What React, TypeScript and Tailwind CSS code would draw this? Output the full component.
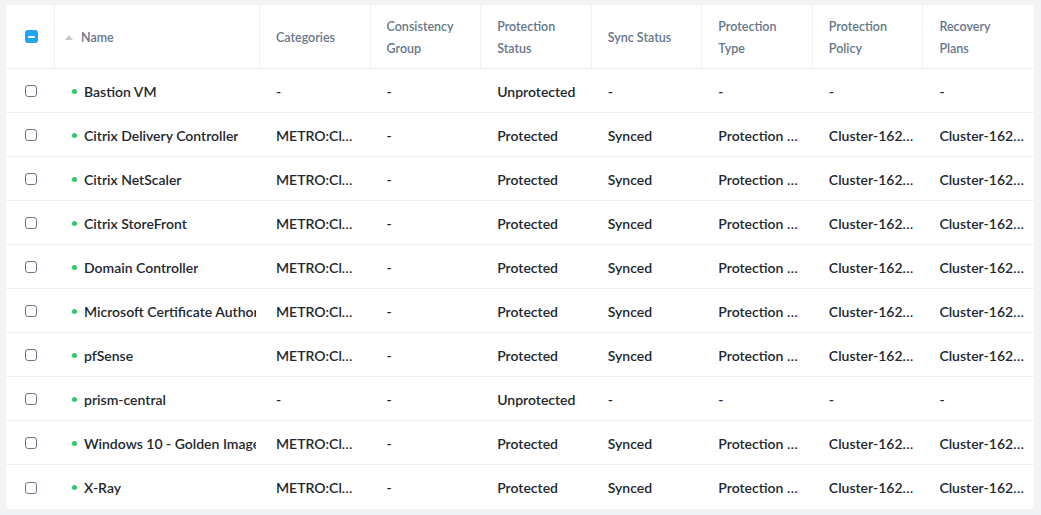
const columns = [
  "Categories",
  "Consistency\nGroup",
  "Protection\nStatus",
  "Sync Status",
  "Protection\nType",
  "Protection\nPolicy",
  "Recovery\nPlans",
];

interface VmRow {
  name: string;
  protectedVm: boolean;
}

const rows: VmRow[] = [
  { name: "Bastion VM", protectedVm: false },
  { name: "Citrix Delivery Controller", protectedVm: true },
  { name: "Citrix NetScaler", protectedVm: true },
  { name: "Citrix StoreFront", protectedVm: true },
  { name: "Domain Controller", protectedVm: true },
  { name: "Microsoft Certificate Authority", protectedVm: true },
  { name: "pfSense", protectedVm: true },
  { name: "prism-central", protectedVm: false },
  { name: "Windows 10 - Golden Image", protectedVm: true },
  { name: "X-Ray", protectedVm: true },
];

const grid = "grid grid-cols-[49px_205px_repeat(7,minmax(0,1fr))]";

const Cell = ({ text, wide }: { text: string; wide?: boolean }) => (
  <div className={`flex items-center pl-4 min-w-0 ${wide ? "pr-[14px]" : "pr-[9px]"}`}>
    <span className="truncate">{text}</span>
  </div>
);

export default function App() {
  return (
    <div
      className="w-[1041px] h-[515px] bg-[#f2f3f5] pt-[5px] px-[6px] overflow-hidden"
      style={{ fontFamily: "Lato, 'Liberation Sans', sans-serif" }}
    >
      <div className="w-[1028px] bg-white rounded-[4px]">
        {/* header */}
        <div className={`${grid} h-[64px] border-b border-[#eceef1] text-[12.5px] leading-[22px] font-semibold text-[#66768a]`}>
          <div className="flex items-center pl-[19px] border-r border-[#eef0f2]">
            <div className="w-[13px] h-[13px] rounded-[3px] bg-[#22a4f5] flex items-center justify-center">
              <div className="w-[7px] h-[2px] bg-white rounded-full" />
            </div>
          </div>
          <div className="flex items-center pl-[10px] pt-[2px] border-r border-[#eef0f2]">
            <svg width="8" height="5" viewBox="0 0 8 5" className="mr-[8px] mb-[1px]">
              <path d="M4 0 L8 5 L0 5 Z" fill="#c3cad3" />
            </svg>
            <span>Name</span>
          </div>
          {columns.map((c, i) => (
            <div
              key={c}
              className={`flex items-center px-4 pt-[2px] whitespace-pre-line ${i < columns.length - 1 ? "border-r border-[#eef0f2]" : ""}`}
            >
              {c}
            </div>
          ))}
        </div>
        {/* rows */}
        {rows.map((r, i) => (
          <div
            key={r.name}
            className={`${grid} h-[44px] pt-[1px] text-[14px] font-semibold text-[#22272e] ${i < rows.length - 1 ? "border-b border-[#eef0f2]" : ""}`}
          >
            <div className="flex items-center pl-[19px]">
              <div className="w-[12px] h-[12px] rounded-[3px] border border-[#6b7788] bg-white" />
            </div>
            <div className="flex items-center pl-[17px] pr-[4px] overflow-hidden whitespace-nowrap">
              <span className="w-[5px] h-[5px] rounded-full bg-[#36c66b] mr-[7px] shrink-0" />
              <span className="overflow-hidden">{r.name}</span>
            </div>
            <Cell text={r.protectedVm ? "METRO:Cluster-1620" : "-"} wide />
            <Cell text="-" />
            <Cell text={r.protectedVm ? "Protected" : "Unprotected"} />
            <Cell text={r.protectedVm ? "Synced" : "-"} />
            <Cell text={r.protectedVm ? "Protection Domain" : "-"} />
            <Cell text={r.protectedVm ? "Cluster-1620-Policy" : "-"} />
            <Cell text={r.protectedVm ? "Cluster-1620-Plan" : "-"} />
          </div>
        ))}
      </div>
    </div>
  );
}
